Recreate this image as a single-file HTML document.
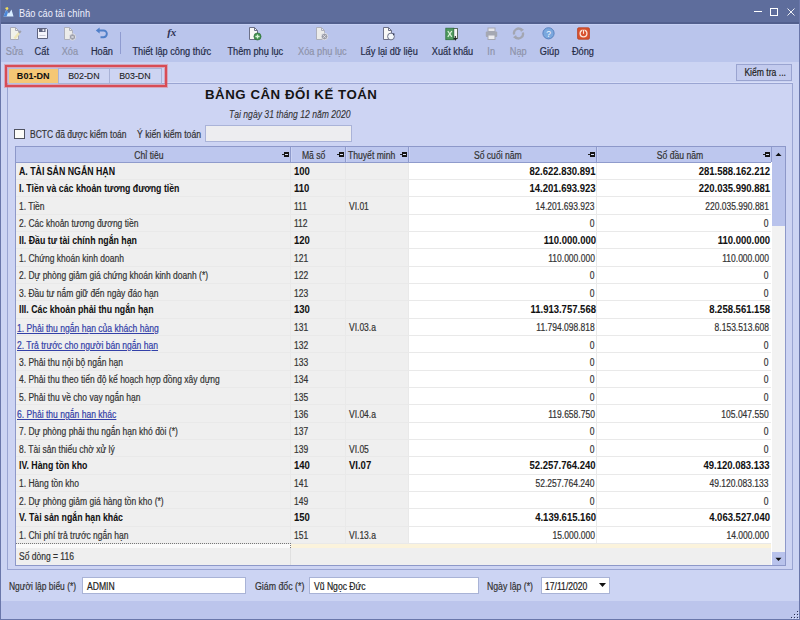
<!DOCTYPE html><html><head><meta charset="utf-8"><style>
*{margin:0;padding:0;box-sizing:border-box}
html,body{width:800px;height:620px;overflow:hidden;background:#ccd4f3;font-family:"Liberation Sans",sans-serif;color:#222}
.a{position:absolute}
.t{position:absolute;white-space:nowrap}
.t>span{display:inline-block}
.sk{-webkit-text-stroke:0.2px currentColor}
</style></head><body>
<div class="a" style="left:0px;top:0px;width:800px;height:24px;background:#5e6d9c;"></div>
<div class="a" style="left:0px;top:22px;width:800px;height:2px;background:#515f8d;"></div>
<div class="t" style="left:18.5px;top:6.5px;font-size:11.5px;line-height:13.225px;color:#eef0ff;font-weight:normal;font-style:normal;"><span style="transform:scaleX(0.8);transform-origin:0 0;">Báo cáo tài chính</span></div>
<svg class="a" style="left:3px;top:7px" width="11" height="10" viewBox="0 0 11 10">
<path d="M0.5 9.5 L3 3 L6 6.5 L8.5 2.5 L10.5 9.5 Z" fill="#d8ecff"/><path d="M0.5 9.5 L3 3 L5 5.5 L3.5 9.5 Z" fill="#4a86d8"/><path d="M2 1 L4 3.5 L5.5 1.5 L4.5 0 Z" fill="#f4e05a"/></svg>
<svg class="a" style="left:750px;top:4px" width="50" height="16" viewBox="0 0 50 16">
<path d="M4 7.5 H12" stroke="#fff" stroke-width="1"/>
<rect x="20.5" y="4.5" width="7" height="7" fill="none" stroke="#fff" stroke-width="1"/>
<path d="M37.5 4.5 L44.5 11.5 M44.5 4.5 L37.5 11.5" stroke="#fff" stroke-width="0.9"/></svg>
<div class="a" style="left:1px;top:24px;width:798px;height:38px;background:#bac5ec;"></div>
<div class="a" style="left:1px;top:24px;width:798px;height:1px;background:#c6d0f3;"></div>
<div class="t" style="left:-185.5px;width:400px;text-align:center;top:45.5px;font-size:10px;line-height:11.5px;color:#8e93aa;font-weight:normal;font-style:normal;-webkit-text-stroke:0.2px #8e93aa;"><span style="transform:scaleX(0.92);transform-origin:50% 0;">Sửa</span></div>
<div class="t" style="left:-158px;width:400px;text-align:center;top:45.5px;font-size:10px;line-height:11.5px;color:#262c48;font-weight:normal;font-style:normal;-webkit-text-stroke:0.2px #262c48;"><span style="transform:scaleX(0.92);transform-origin:50% 0;">Cất</span></div>
<div class="t" style="left:-130.25px;width:400px;text-align:center;top:45.5px;font-size:10px;line-height:11.5px;color:#8e93aa;font-weight:normal;font-style:normal;-webkit-text-stroke:0.2px #8e93aa;"><span style="transform:scaleX(0.92);transform-origin:50% 0;">Xóa</span></div>
<div class="t" style="left:-98.25px;width:400px;text-align:center;top:45.5px;font-size:10px;line-height:11.5px;color:#262c48;font-weight:normal;font-style:normal;-webkit-text-stroke:0.2px #262c48;"><span style="transform:scaleX(0.92);transform-origin:50% 0;">Hoãn</span></div>
<div class="t" style="left:-28.400000000000006px;width:400px;text-align:center;top:45.5px;font-size:10px;line-height:11.5px;color:#262c48;font-weight:normal;font-style:normal;-webkit-text-stroke:0.2px #262c48;"><span style="transform:scaleX(0.92);transform-origin:50% 0;">Thiết lập công thức</span></div>
<div class="t" style="left:55.25px;width:400px;text-align:center;top:45.5px;font-size:10px;line-height:11.5px;color:#262c48;font-weight:normal;font-style:normal;-webkit-text-stroke:0.2px #262c48;"><span style="transform:scaleX(0.92);transform-origin:50% 0;">Thêm phụ lục</span></div>
<div class="t" style="left:122.25px;width:400px;text-align:center;top:45.5px;font-size:10px;line-height:11.5px;color:#8e93aa;font-weight:normal;font-style:normal;-webkit-text-stroke:0.2px #8e93aa;"><span style="transform:scaleX(0.92);transform-origin:50% 0;">Xóa phụ lục</span></div>
<div class="t" style="left:188.89999999999998px;width:400px;text-align:center;top:45.5px;font-size:10px;line-height:11.5px;color:#262c48;font-weight:normal;font-style:normal;-webkit-text-stroke:0.2px #262c48;"><span style="transform:scaleX(0.92);transform-origin:50% 0;">Lấy lại dữ liệu</span></div>
<div class="t" style="left:252.10000000000002px;width:400px;text-align:center;top:45.5px;font-size:10px;line-height:11.5px;color:#262c48;font-weight:normal;font-style:normal;-webkit-text-stroke:0.2px #262c48;"><span style="transform:scaleX(0.92);transform-origin:50% 0;">Xuất khẩu</span></div>
<div class="t" style="left:291.4px;width:400px;text-align:center;top:45.5px;font-size:10px;line-height:11.5px;color:#8e93aa;font-weight:normal;font-style:normal;-webkit-text-stroke:0.2px #8e93aa;"><span style="transform:scaleX(0.92);transform-origin:50% 0;">In</span></div>
<div class="t" style="left:318px;width:400px;text-align:center;top:45.5px;font-size:10px;line-height:11.5px;color:#8e93aa;font-weight:normal;font-style:normal;-webkit-text-stroke:0.2px #8e93aa;"><span style="transform:scaleX(0.92);transform-origin:50% 0;">Nạp</span></div>
<div class="t" style="left:349.20000000000005px;width:400px;text-align:center;top:45.5px;font-size:10px;line-height:11.5px;color:#262c48;font-weight:normal;font-style:normal;-webkit-text-stroke:0.2px #262c48;"><span style="transform:scaleX(0.92);transform-origin:50% 0;">Giúp</span></div>
<div class="t" style="left:383px;width:400px;text-align:center;top:45.5px;font-size:10px;line-height:11.5px;color:#262c48;font-weight:normal;font-style:normal;-webkit-text-stroke:0.2px #262c48;"><span style="transform:scaleX(0.92);transform-origin:50% 0;">Đóng</span></div>
<div class="a" style="left:120px;top:32px;width:1px;height:22px;background:#8f9bd0;"></div>
<svg class="a" style="left:9px;top:27px" width="13" height="13" viewBox="0 0 13 13"><path d="M1.5 0.5 H6.5 L9.5 3.5 V12.5 H1.5 Z" fill="#f1f1ea" stroke="#a9abba"/><path d="M6.5 0.5 V3.5 H9.5" fill="none" stroke="#a9abba"/><path d="M5.5 11.5 L10.5 5.5" stroke="#efe6b8" stroke-width="2.4"/><path d="M10 6 L11.8 3.8" stroke="#9ea0ae" stroke-width="2"/></svg>
<svg class="a" style="left:36px;top:27px" width="13" height="13" viewBox="0 0 13 13"><path d="M1.5 1.5 H10.5 L11.5 2.5 V11.5 H1.5 Z" fill="#f5f5fd" stroke="#5f6480"/><rect x="3" y="1.5" width="6.5" height="3.5" fill="#5f6480"/><rect x="6.5" y="2.2" width="1.8" height="2" fill="#f0f0f8"/><path d="M3.5 8.5 H9.5" stroke="#c9cad8"/></svg>
<svg class="a" style="left:63px;top:27px" width="13" height="14" viewBox="0 0 13 14"><path d="M1.5 0.5 H6.5 L9.5 3.5 V12.5 H1.5 Z" fill="#ececea" stroke="#aeb0bc"/><path d="M6.5 0.5 V3.5 H9.5" fill="none" stroke="#aeb0bc"/><circle cx="9.5" cy="10" r="3.2" fill="#9c9ea9" stroke="#e8e8ee" stroke-width="0.8"/><path d="M8.3 8.8 L10.7 11.2 M10.7 8.8 L8.3 11.2" stroke="#e8e8ee" stroke-width="0.9"/></svg>
<svg class="a" style="left:95px;top:27px" width="14" height="12" viewBox="0 0 14 12"><path d="M4 3.5 H8.5 A3.3 3.3 0 0 1 8.5 10.2 H5.5" fill="none" stroke="#4f7fc8" stroke-width="1.9"/><path d="M0.8 3.5 L4.6 0.4 V6.6 Z" fill="#4f7fc8"/></svg>
<div class="t" style="left:167.2px;top:26.3px;font-size:11px;line-height:12.649999999999999px;color:#2e3354;font-weight:bold;font-style:italic;font-family:'Liberation Serif',serif;"><span style="transform:scaleX(1.0);transform-origin:0 0;">fx</span></div>
<svg class="a" style="left:248px;top:27px" width="14" height="14" viewBox="0 0 14 14"><path d="M1.5 0.5 H6.5 L9.5 3.5 V12.5 H1.5 Z" fill="#f8f8f6" stroke="#6c7088"/><path d="M6.5 0.5 V3.5 H9.5" fill="none" stroke="#6c7088"/><circle cx="9.5" cy="9.5" r="3.6" fill="#3f8f4c" stroke="#2d6b38" stroke-width="0.6"/><path d="M9.5 7.4 V11.6 M7.4 9.5 H11.6" stroke="#d9f5d6" stroke-width="1.3"/></svg>
<svg class="a" style="left:315px;top:27px" width="14" height="14" viewBox="0 0 14 14"><path d="M1.5 0.5 H6.5 L9.5 3.5 V12.5 H1.5 Z" fill="#ececea" stroke="#aeb0bc"/><path d="M6.5 0.5 V3.5 H9.5" fill="none" stroke="#aeb0bc"/><circle cx="9.5" cy="9.5" r="3.3" fill="#9c9ea9" stroke="#e8e8ee" stroke-width="0.8"/><path d="M8.3 8.3 L10.7 10.7 M10.7 8.3 L8.3 10.7" stroke="#e8e8ee" stroke-width="0.9"/></svg>
<svg class="a" style="left:382px;top:27px" width="14" height="14" viewBox="0 0 14 14"><path d="M1.5 0.5 H6.5 L9.5 3.5 V12.5 H1.5 Z" fill="#f8f8f6" stroke="#6c7088"/><path d="M6.5 0.5 V3.5 H9.5" fill="none" stroke="#6c7088"/><circle cx="9" cy="9.5" r="3.4" fill="#f4f8fb" stroke="#6c7088" stroke-width="1"/><path d="M10.5 6.3 L12.8 6.8 L11.6 8.6 Z" fill="#2c3450"/></svg>
<svg class="a" style="left:445px;top:27px" width="14" height="14" viewBox="0 0 14 14"><rect x="8" y="1.5" width="4.5" height="10" fill="#f6f6f6" stroke="#5b6a60"/><rect x="0.8" y="1.2" width="8" height="11.5" fill="#4f9a5e" stroke="#2f6f3e" stroke-width="0.8"/><path d="M2.8 4 L6.8 9.8 M6.8 4 L2.8 9.8" stroke="#dff3dc" stroke-width="1.2"/><path d="M10.3 9 V12.5 M8.8 11 L10.3 12.8 L11.8 11" stroke="#1f2a22" stroke-width="1.1" fill="none"/></svg>
<svg class="a" style="left:485px;top:27px" width="13" height="14" viewBox="0 0 13 14"><rect x="3" y="1" width="7" height="3.5" fill="#e6e6ea" stroke="#a5a8b4"/><rect x="0.8" y="4.5" width="11.4" height="5.5" rx="1" fill="#a5a8b2"/><rect x="3" y="8" width="7" height="4.5" fill="#ededf0" stroke="#a5a8b4"/></svg>
<svg class="a" style="left:512px;top:27px" width="13" height="13" viewBox="0 0 13 13"><path d="M2.2 7.5 A4.5 4.5 0 0 1 9.5 2.8" fill="none" stroke="#a3a6b2" stroke-width="2.3"/><path d="M10.8 5.5 A4.5 4.5 0 0 1 3.5 10.2" fill="none" stroke="#a3a6b2" stroke-width="2.3"/><path d="M8.5 0.5 L12 2.8 L8.8 5 Z" fill="#a3a6b2"/><path d="M4.5 12.5 L1 10.2 L4.2 8 Z" fill="#a3a6b2"/></svg>
<svg class="a" style="left:542px;top:27px" width="13" height="13" viewBox="0 0 13 13"><circle cx="6.5" cy="6.3" r="5.6" fill="#7aa8de" stroke="#5a82bf" stroke-width="1"/><text x="6.5" y="9.6" font-size="8.5" fill="#f4f8ff" text-anchor="middle" font-family="Liberation Sans">?</text></svg>
<svg class="a" style="left:577px;top:27px" width="13" height="13" viewBox="0 0 13 13"><rect x="0.6" y="0.8" width="11.8" height="11.4" rx="1.2" fill="#d9522f" stroke="#b8401f" stroke-width="0.8"/><circle cx="6.5" cy="6.5" r="3.4" fill="none" stroke="#fbe6dc" stroke-width="1.3"/><path d="M6.5 2.5 V7" stroke="#d9522f" stroke-width="2.2"/><path d="M6.5 3 V6.8" stroke="#fbe6dc" stroke-width="1.1"/></svg>
<div class="a" style="left:1px;top:62px;width:798px;height:557px;background:#ccd4f3;"></div>
<div class="a" style="left:8px;top:82px;width:785px;height:1px;background:#d8def8;"></div>
<div class="a" style="left:7px;top:83px;width:786px;height:487px;border:1px solid #9aa5d2;background:#cdd4f3"></div>
<div class="a" style="left:8px;top:68px;width:51px;height:16px;background:#f5c775;border:1px solid #b9c0de;border-right:none"></div>
<div class="a" style="left:58px;top:68px;width:52px;height:16px;background:#cdd4f2;border:1px solid #a9b2d6"></div>
<div class="a" style="left:109px;top:68px;width:53px;height:16px;background:#cdd4f2;border:1px solid #a9b2d6"></div>
<div class="a" style="left:5px;top:65px;width:162px;height:22px;border:2px solid #d84c55;box-shadow:0 0 0 1px rgba(222,110,120,.45),inset 0 0 0 1px rgba(222,110,120,.45)"></div>
<div class="t" style="left:-166.5px;width:400px;text-align:center;top:71px;font-size:9.5px;line-height:10.924999999999999px;color:#111;font-weight:bold;font-style:normal;-webkit-text-stroke:0.05px #111;"><span style="transform:scaleX(0.95);transform-origin:50% 0;">B01-DN</span></div>
<div class="t" style="left:-116px;width:400px;text-align:center;top:71px;font-size:9.5px;line-height:10.924999999999999px;color:#222;font-weight:normal;font-style:normal;-webkit-text-stroke:0.1px #222;"><span style="transform:scaleX(0.93);transform-origin:50% 0;">B02-DN</span></div>
<div class="t" style="left:-65px;width:400px;text-align:center;top:71px;font-size:9.5px;line-height:10.924999999999999px;color:#222;font-weight:normal;font-style:normal;-webkit-text-stroke:0.1px #222;"><span style="transform:scaleX(0.93);transform-origin:50% 0;">B03-DN</span></div>
<div class="a" style="left:736px;top:64px;width:56px;height:17px;background:#c3cbee;border:1px solid #9aa4d0"></div>
<div class="t" style="left:565px;width:400px;text-align:center;top:67px;font-size:10px;line-height:11.5px;color:#222;font-weight:normal;font-style:normal;-webkit-text-stroke:0.2px #222;"><span style="transform:scaleX(0.86);transform-origin:50% 0;">Kiểm tra ...</span></div>
<div class="t" style="left:205px;top:87px;font-size:13.6px;line-height:15.639999999999999px;color:#151515;font-weight:bold;font-style:normal;letter-spacing:0.55px"><span style="transform:scaleX(0.975);transform-origin:0 0;">BẢNG CÂN ĐỐI KẾ TOÁN</span></div>
<div class="t" style="left:229px;top:109px;font-size:10px;line-height:11.5px;color:#333;font-weight:normal;font-style:italic;-webkit-text-stroke:0.1px #333;"><span style="transform:scaleX(0.86);transform-origin:0 0;">Tại ngày 31 tháng 12 năm 2020</span></div>
<div class="a" style="left:14px;top:129px;width:10.5px;height:10px;background:#fcfcf8;border:1px solid #4f5260"></div>
<div class="t" style="left:29.7px;top:129.3px;font-size:10px;line-height:11.5px;color:#333;font-weight:normal;font-style:normal;-webkit-text-stroke:0.2px #333;"><span style="transform:scaleX(0.848);transform-origin:0 0;">BCTC đã được kiểm toán</span></div>
<div class="t" style="left:137px;top:129.3px;font-size:10px;line-height:11.5px;color:#333;font-weight:normal;font-style:normal;-webkit-text-stroke:0.2px #333;"><span style="transform:scaleX(0.866);transform-origin:0 0;">Ý kiến kiểm toán</span></div>
<div class="a" style="left:205px;top:125px;width:147px;height:17px;background:#ededf0;border:1px solid #aab3d8"></div>
<div class="a" style="left:15px;top:146px;width:771px;height:420px;background:#fff;border:1px solid #8d98c9"></div>
<div class="a" style="left:16px;top:163px;width:274px;height:381px;background:#efefef;"></div>
<div class="a" style="left:291px;top:163px;width:117px;height:381px;background:#efefef;"></div>
<div class="a" style="left:16px;top:147px;width:755px;height:15px;background:#bdc7ee;"></div>
<div class="a" style="left:16px;top:162px;width:755px;height:1px;background:#8f9bcc;"></div>
<div class="a" style="left:290px;top:147px;width:1px;height:15px;background:#8f9bcc;"></div>
<div class="a" style="left:291px;top:147px;width:1px;height:15px;background:#cad2f3;"></div>
<div class="a" style="left:345px;top:147px;width:1px;height:15px;background:#8f9bcc;"></div>
<div class="a" style="left:346px;top:147px;width:1px;height:15px;background:#cad2f3;"></div>
<div class="a" style="left:408px;top:147px;width:1px;height:15px;background:#8f9bcc;"></div>
<div class="a" style="left:409px;top:147px;width:1px;height:15px;background:#cad2f3;"></div>
<div class="a" style="left:596px;top:147px;width:1px;height:15px;background:#8f9bcc;"></div>
<div class="a" style="left:597px;top:147px;width:1px;height:15px;background:#cad2f3;"></div>
<div class="a" style="left:771px;top:147px;width:1px;height:15px;background:#8f9bcc;"></div>
<div class="a" style="left:772px;top:147px;width:1px;height:15px;background:#cad2f3;"></div>
<div class="t" style="left:-51.5px;width:400px;text-align:center;top:149.5px;font-size:10px;line-height:11.5px;color:#333;font-weight:normal;font-style:normal;-webkit-text-stroke:0.2px #333;"><span style="transform:scaleX(0.86);transform-origin:50% 0;">Chỉ tiêu</span></div>
<svg class="a" style="left:282px;top:152px" width="7" height="6" viewBox="0 0 7 6"><rect x="0" y="2" width="2" height="1" fill="#222"/><rect x="2" y="0" width="5" height="5" fill="#151515"/><rect x="3" y="2" width="3" height="1" fill="#d8def5"/></svg>
<div class="t" style="left:113.5px;width:400px;text-align:center;top:149.5px;font-size:10px;line-height:11.5px;color:#333;font-weight:normal;font-style:normal;-webkit-text-stroke:0.2px #333;"><span style="transform:scaleX(0.86);transform-origin:50% 0;">Mã số</span></div>
<svg class="a" style="left:337px;top:152px" width="7" height="6" viewBox="0 0 7 6"><rect x="0" y="2" width="2" height="1" fill="#222"/><rect x="2" y="0" width="5" height="5" fill="#151515"/><rect x="3" y="2" width="3" height="1" fill="#d8def5"/></svg>
<div class="t" style="left:348px;top:149.5px;font-size:10px;line-height:11.5px;color:#333;font-weight:normal;font-style:normal;-webkit-text-stroke:0.2px #333;"><span style="transform:scaleX(0.86);transform-origin:0 0;">Thuyết minh</span></div>
<svg class="a" style="left:400px;top:152px" width="7" height="6" viewBox="0 0 7 6"><rect x="0" y="2" width="2" height="1" fill="#222"/><rect x="2" y="0" width="5" height="5" fill="#151515"/><rect x="3" y="2" width="3" height="1" fill="#d8def5"/></svg>
<div class="t" style="left:298.0px;width:400px;text-align:center;top:149.5px;font-size:10px;line-height:11.5px;color:#333;font-weight:normal;font-style:normal;-webkit-text-stroke:0.2px #333;"><span style="transform:scaleX(0.86);transform-origin:50% 0;">Số cuối năm</span></div>
<svg class="a" style="left:588px;top:152px" width="7" height="6" viewBox="0 0 7 6"><rect x="0" y="2" width="2" height="1" fill="#222"/><rect x="2" y="0" width="5" height="5" fill="#151515"/><rect x="3" y="2" width="3" height="1" fill="#d8def5"/></svg>
<div class="t" style="left:479.5px;width:400px;text-align:center;top:149.5px;font-size:10px;line-height:11.5px;color:#333;font-weight:normal;font-style:normal;-webkit-text-stroke:0.2px #333;"><span style="transform:scaleX(0.86);transform-origin:50% 0;">Số đầu năm</span></div>
<svg class="a" style="left:763px;top:152px" width="7" height="6" viewBox="0 0 7 6"><rect x="0" y="2" width="2" height="1" fill="#222"/><rect x="2" y="0" width="5" height="5" fill="#151515"/><rect x="3" y="2" width="3" height="1" fill="#d8def5"/></svg>
<div class="a" style="left:16px;top:179px;width:755px;height:1px;background:#e9e9e9;"></div>
<div class="a" style="left:16px;top:196px;width:755px;height:1px;background:#e9e9e9;"></div>
<div class="a" style="left:16px;top:214px;width:755px;height:1px;background:#e9e9e9;"></div>
<div class="a" style="left:16px;top:231px;width:755px;height:1px;background:#e9e9e9;"></div>
<div class="a" style="left:16px;top:248px;width:755px;height:1px;background:#e9e9e9;"></div>
<div class="a" style="left:16px;top:266px;width:755px;height:1px;background:#e9e9e9;"></div>
<div class="a" style="left:16px;top:283px;width:755px;height:1px;background:#e9e9e9;"></div>
<div class="a" style="left:16px;top:300px;width:755px;height:1px;background:#e9e9e9;"></div>
<div class="a" style="left:16px;top:318px;width:755px;height:1px;background:#e9e9e9;"></div>
<div class="a" style="left:16px;top:335px;width:755px;height:1px;background:#e9e9e9;"></div>
<div class="a" style="left:16px;top:352px;width:755px;height:1px;background:#e9e9e9;"></div>
<div class="a" style="left:16px;top:370px;width:755px;height:1px;background:#e9e9e9;"></div>
<div class="a" style="left:16px;top:387px;width:755px;height:1px;background:#e9e9e9;"></div>
<div class="a" style="left:16px;top:404px;width:755px;height:1px;background:#e9e9e9;"></div>
<div class="a" style="left:16px;top:422px;width:755px;height:1px;background:#e9e9e9;"></div>
<div class="a" style="left:16px;top:439px;width:755px;height:1px;background:#e9e9e9;"></div>
<div class="a" style="left:16px;top:456px;width:755px;height:1px;background:#e9e9e9;"></div>
<div class="a" style="left:16px;top:474px;width:755px;height:1px;background:#e9e9e9;"></div>
<div class="a" style="left:16px;top:491px;width:755px;height:1px;background:#e9e9e9;"></div>
<div class="a" style="left:16px;top:508px;width:755px;height:1px;background:#e9e9e9;"></div>
<div class="a" style="left:16px;top:526px;width:755px;height:1px;background:#e9e9e9;"></div>
<div class="a" style="left:16px;top:543px;width:755px;height:1px;background:#e9e9e9;"></div>
<div class="a" style="left:290px;top:163px;width:1px;height:381px;background:#e9e9e9;"></div>
<div class="a" style="left:345px;top:163px;width:1px;height:381px;background:#e9e9e9;"></div>
<div class="a" style="left:408px;top:163px;width:1px;height:381px;background:#e9e9e9;"></div>
<div class="a" style="left:596px;top:163px;width:1px;height:381px;background:#e9e9e9;"></div>
<div class="t" style="left:19px;top:162.8px;font-size:10px;line-height:17.32px;color:#111;font-weight:bold;font-style:normal;-webkit-text-stroke:0.05px #111;"><span style="transform:scaleX(0.877);transform-origin:0 0;">A. TÀI SẢN NGẮN HẠN</span></div>
<div class="t" style="left:294px;top:162.8px;font-size:10px;line-height:17.32px;color:#111;font-weight:bold;font-style:normal;-webkit-text-stroke:0.05px #111;"><span style="transform:scaleX(0.95);transform-origin:0 0;">100</span></div>
<div class="t" style="left:349px;top:162.8px;font-size:10px;line-height:17.32px;color:#111;font-weight:bold;font-style:normal;-webkit-text-stroke:0.05px #111;"><span style="transform:scaleX(0.95);transform-origin:0 0;"></span></div>
<div class="t" style="left:195.70000000000005px;width:400px;text-align:right;top:162.8px;font-size:10px;line-height:17.32px;color:#111;font-weight:bold;font-style:normal;-webkit-text-stroke:0.05px #111;"><span style="transform:scaleX(0.95);transform-origin:100% 0;">82.622.830.891</span></div>
<div class="t" style="left:369.70000000000005px;width:400px;text-align:right;top:162.8px;font-size:10px;line-height:17.32px;color:#111;font-weight:bold;font-style:normal;-webkit-text-stroke:0.05px #111;"><span style="transform:scaleX(0.95);transform-origin:100% 0;">281.588.162.212</span></div>
<div class="t" style="left:19px;top:180.13333333333335px;font-size:10px;line-height:17.32px;color:#111;font-weight:bold;font-style:normal;-webkit-text-stroke:0.05px #111;"><span style="transform:scaleX(0.877);transform-origin:0 0;">I. Tiền và các khoản tương đương tiền</span></div>
<div class="t" style="left:294px;top:180.13333333333335px;font-size:10px;line-height:17.32px;color:#111;font-weight:bold;font-style:normal;-webkit-text-stroke:0.05px #111;"><span style="transform:scaleX(0.95);transform-origin:0 0;">110</span></div>
<div class="t" style="left:349px;top:180.13333333333335px;font-size:10px;line-height:17.32px;color:#111;font-weight:bold;font-style:normal;-webkit-text-stroke:0.05px #111;"><span style="transform:scaleX(0.95);transform-origin:0 0;"></span></div>
<div class="t" style="left:195.70000000000005px;width:400px;text-align:right;top:180.13333333333335px;font-size:10px;line-height:17.32px;color:#111;font-weight:bold;font-style:normal;-webkit-text-stroke:0.05px #111;"><span style="transform:scaleX(0.95);transform-origin:100% 0;">14.201.693.923</span></div>
<div class="t" style="left:369.70000000000005px;width:400px;text-align:right;top:180.13333333333335px;font-size:10px;line-height:17.32px;color:#111;font-weight:bold;font-style:normal;-webkit-text-stroke:0.05px #111;"><span style="transform:scaleX(0.95);transform-origin:100% 0;">220.035.990.881</span></div>
<div class="t" style="left:19px;top:197.91666666666666px;font-size:10px;line-height:17.32px;color:#333;font-weight:normal;font-style:normal;-webkit-text-stroke:0.2px #333;"><span style="transform:scaleX(0.85);transform-origin:0 0;">1. Tiền</span></div>
<div class="t" style="left:294px;top:197.91666666666666px;font-size:10px;line-height:17.32px;color:#333;font-weight:normal;font-style:normal;-webkit-text-stroke:0.2px #333;"><span style="transform:scaleX(0.85);transform-origin:0 0;">111</span></div>
<div class="t" style="left:349px;top:197.91666666666666px;font-size:10px;line-height:17.32px;color:#333;font-weight:normal;font-style:normal;-webkit-text-stroke:0.2px #333;"><span style="transform:scaleX(0.85);transform-origin:0 0;">VI.01</span></div>
<div class="t" style="left:194.79999999999995px;width:400px;text-align:right;top:197.91666666666666px;font-size:10px;line-height:17.32px;color:#333;font-weight:normal;font-style:normal;-webkit-text-stroke:0.2px #333;"><span style="transform:scaleX(0.85);transform-origin:100% 0;">14.201.693.923</span></div>
<div class="t" style="left:368.79999999999995px;width:400px;text-align:right;top:197.91666666666666px;font-size:10px;line-height:17.32px;color:#333;font-weight:normal;font-style:normal;-webkit-text-stroke:0.2px #333;"><span style="transform:scaleX(0.85);transform-origin:100% 0;">220.035.990.881</span></div>
<div class="t" style="left:19px;top:215.25px;font-size:10px;line-height:17.32px;color:#333;font-weight:normal;font-style:normal;-webkit-text-stroke:0.2px #333;"><span style="transform:scaleX(0.85);transform-origin:0 0;">2. Các khoản tương đương tiền</span></div>
<div class="t" style="left:294px;top:215.25px;font-size:10px;line-height:17.32px;color:#333;font-weight:normal;font-style:normal;-webkit-text-stroke:0.2px #333;"><span style="transform:scaleX(0.85);transform-origin:0 0;">112</span></div>
<div class="t" style="left:349px;top:215.25px;font-size:10px;line-height:17.32px;color:#333;font-weight:normal;font-style:normal;-webkit-text-stroke:0.2px #333;"><span style="transform:scaleX(0.85);transform-origin:0 0;"></span></div>
<div class="t" style="left:194.79999999999995px;width:400px;text-align:right;top:215.25px;font-size:10px;line-height:17.32px;color:#333;font-weight:normal;font-style:normal;-webkit-text-stroke:0.2px #333;"><span style="transform:scaleX(0.85);transform-origin:100% 0;">0</span></div>
<div class="t" style="left:368.79999999999995px;width:400px;text-align:right;top:215.25px;font-size:10px;line-height:17.32px;color:#333;font-weight:normal;font-style:normal;-webkit-text-stroke:0.2px #333;"><span style="transform:scaleX(0.85);transform-origin:100% 0;">0</span></div>
<div class="t" style="left:19px;top:232.13333333333333px;font-size:10px;line-height:17.32px;color:#111;font-weight:bold;font-style:normal;-webkit-text-stroke:0.05px #111;"><span style="transform:scaleX(0.877);transform-origin:0 0;">II. Đầu tư tài chính ngắn hạn</span></div>
<div class="t" style="left:294px;top:232.13333333333333px;font-size:10px;line-height:17.32px;color:#111;font-weight:bold;font-style:normal;-webkit-text-stroke:0.05px #111;"><span style="transform:scaleX(0.95);transform-origin:0 0;">120</span></div>
<div class="t" style="left:349px;top:232.13333333333333px;font-size:10px;line-height:17.32px;color:#111;font-weight:bold;font-style:normal;-webkit-text-stroke:0.05px #111;"><span style="transform:scaleX(0.95);transform-origin:0 0;"></span></div>
<div class="t" style="left:195.70000000000005px;width:400px;text-align:right;top:232.13333333333333px;font-size:10px;line-height:17.32px;color:#111;font-weight:bold;font-style:normal;-webkit-text-stroke:0.05px #111;"><span style="transform:scaleX(0.95);transform-origin:100% 0;">110.000.000</span></div>
<div class="t" style="left:369.70000000000005px;width:400px;text-align:right;top:232.13333333333333px;font-size:10px;line-height:17.32px;color:#111;font-weight:bold;font-style:normal;-webkit-text-stroke:0.05px #111;"><span style="transform:scaleX(0.95);transform-origin:100% 0;">110.000.000</span></div>
<div class="t" style="left:19px;top:249.91666666666669px;font-size:10px;line-height:17.32px;color:#333;font-weight:normal;font-style:normal;-webkit-text-stroke:0.2px #333;"><span style="transform:scaleX(0.85);transform-origin:0 0;">1. Chứng khoán kinh doanh</span></div>
<div class="t" style="left:294px;top:249.91666666666669px;font-size:10px;line-height:17.32px;color:#333;font-weight:normal;font-style:normal;-webkit-text-stroke:0.2px #333;"><span style="transform:scaleX(0.85);transform-origin:0 0;">121</span></div>
<div class="t" style="left:349px;top:249.91666666666669px;font-size:10px;line-height:17.32px;color:#333;font-weight:normal;font-style:normal;-webkit-text-stroke:0.2px #333;"><span style="transform:scaleX(0.85);transform-origin:0 0;"></span></div>
<div class="t" style="left:194.79999999999995px;width:400px;text-align:right;top:249.91666666666669px;font-size:10px;line-height:17.32px;color:#333;font-weight:normal;font-style:normal;-webkit-text-stroke:0.2px #333;"><span style="transform:scaleX(0.85);transform-origin:100% 0;">110.000.000</span></div>
<div class="t" style="left:368.79999999999995px;width:400px;text-align:right;top:249.91666666666669px;font-size:10px;line-height:17.32px;color:#333;font-weight:normal;font-style:normal;-webkit-text-stroke:0.2px #333;"><span style="transform:scaleX(0.85);transform-origin:100% 0;">110.000.000</span></div>
<div class="t" style="left:19px;top:267.25px;font-size:10px;line-height:17.32px;color:#333;font-weight:normal;font-style:normal;-webkit-text-stroke:0.2px #333;"><span style="transform:scaleX(0.85);transform-origin:0 0;">2. Dự phòng giảm giá chứng khoán kinh doanh (*)</span></div>
<div class="t" style="left:294px;top:267.25px;font-size:10px;line-height:17.32px;color:#333;font-weight:normal;font-style:normal;-webkit-text-stroke:0.2px #333;"><span style="transform:scaleX(0.85);transform-origin:0 0;">122</span></div>
<div class="t" style="left:349px;top:267.25px;font-size:10px;line-height:17.32px;color:#333;font-weight:normal;font-style:normal;-webkit-text-stroke:0.2px #333;"><span style="transform:scaleX(0.85);transform-origin:0 0;"></span></div>
<div class="t" style="left:194.79999999999995px;width:400px;text-align:right;top:267.25px;font-size:10px;line-height:17.32px;color:#333;font-weight:normal;font-style:normal;-webkit-text-stroke:0.2px #333;"><span style="transform:scaleX(0.85);transform-origin:100% 0;">0</span></div>
<div class="t" style="left:368.79999999999995px;width:400px;text-align:right;top:267.25px;font-size:10px;line-height:17.32px;color:#333;font-weight:normal;font-style:normal;-webkit-text-stroke:0.2px #333;"><span style="transform:scaleX(0.85);transform-origin:100% 0;">0</span></div>
<div class="t" style="left:19px;top:284.5833333333333px;font-size:10px;line-height:17.32px;color:#333;font-weight:normal;font-style:normal;-webkit-text-stroke:0.2px #333;"><span style="transform:scaleX(0.85);transform-origin:0 0;">3. Đầu tư nắm giữ đến ngày đáo hạn</span></div>
<div class="t" style="left:294px;top:284.5833333333333px;font-size:10px;line-height:17.32px;color:#333;font-weight:normal;font-style:normal;-webkit-text-stroke:0.2px #333;"><span style="transform:scaleX(0.85);transform-origin:0 0;">123</span></div>
<div class="t" style="left:349px;top:284.5833333333333px;font-size:10px;line-height:17.32px;color:#333;font-weight:normal;font-style:normal;-webkit-text-stroke:0.2px #333;"><span style="transform:scaleX(0.85);transform-origin:0 0;"></span></div>
<div class="t" style="left:194.79999999999995px;width:400px;text-align:right;top:284.5833333333333px;font-size:10px;line-height:17.32px;color:#333;font-weight:normal;font-style:normal;-webkit-text-stroke:0.2px #333;"><span style="transform:scaleX(0.85);transform-origin:100% 0;">0</span></div>
<div class="t" style="left:368.79999999999995px;width:400px;text-align:right;top:284.5833333333333px;font-size:10px;line-height:17.32px;color:#333;font-weight:normal;font-style:normal;-webkit-text-stroke:0.2px #333;"><span style="transform:scaleX(0.85);transform-origin:100% 0;">0</span></div>
<div class="t" style="left:19px;top:301.46666666666664px;font-size:10px;line-height:17.32px;color:#111;font-weight:bold;font-style:normal;-webkit-text-stroke:0.05px #111;"><span style="transform:scaleX(0.877);transform-origin:0 0;">III. Các khoản phải thu ngắn hạn</span></div>
<div class="t" style="left:294px;top:301.46666666666664px;font-size:10px;line-height:17.32px;color:#111;font-weight:bold;font-style:normal;-webkit-text-stroke:0.05px #111;"><span style="transform:scaleX(0.95);transform-origin:0 0;">130</span></div>
<div class="t" style="left:349px;top:301.46666666666664px;font-size:10px;line-height:17.32px;color:#111;font-weight:bold;font-style:normal;-webkit-text-stroke:0.05px #111;"><span style="transform:scaleX(0.95);transform-origin:0 0;"></span></div>
<div class="t" style="left:195.70000000000005px;width:400px;text-align:right;top:301.46666666666664px;font-size:10px;line-height:17.32px;color:#111;font-weight:bold;font-style:normal;-webkit-text-stroke:0.05px #111;"><span style="transform:scaleX(0.95);transform-origin:100% 0;">11.913.757.568</span></div>
<div class="t" style="left:369.70000000000005px;width:400px;text-align:right;top:301.46666666666664px;font-size:10px;line-height:17.32px;color:#111;font-weight:bold;font-style:normal;-webkit-text-stroke:0.05px #111;"><span style="transform:scaleX(0.95);transform-origin:100% 0;">8.258.561.158</span></div>
<div class="t" style="left:17.3px;top:319.55px;font-size:10px;line-height:17.32px;color:#3340a8;font-weight:normal;font-style:normal;-webkit-text-stroke:0.2px #3340a8;"><span style="transform:scaleX(0.855);transform-origin:0 0;text-decoration:underline">1. Phải thu ngắn hạn của khách hàng</span></div>
<div class="t" style="left:294px;top:319.25px;font-size:10px;line-height:17.32px;color:#333;font-weight:normal;font-style:normal;-webkit-text-stroke:0.2px #333;"><span style="transform:scaleX(0.85);transform-origin:0 0;">131</span></div>
<div class="t" style="left:349px;top:319.25px;font-size:10px;line-height:17.32px;color:#333;font-weight:normal;font-style:normal;-webkit-text-stroke:0.2px #333;"><span style="transform:scaleX(0.85);transform-origin:0 0;">VI.03.a</span></div>
<div class="t" style="left:194.79999999999995px;width:400px;text-align:right;top:319.25px;font-size:10px;line-height:17.32px;color:#333;font-weight:normal;font-style:normal;-webkit-text-stroke:0.2px #333;"><span style="transform:scaleX(0.85);transform-origin:100% 0;">11.794.098.818</span></div>
<div class="t" style="left:368.79999999999995px;width:400px;text-align:right;top:319.25px;font-size:10px;line-height:17.32px;color:#333;font-weight:normal;font-style:normal;-webkit-text-stroke:0.2px #333;"><span style="transform:scaleX(0.85);transform-origin:100% 0;">8.153.513.608</span></div>
<div class="t" style="left:17.3px;top:336.8833333333334px;font-size:10px;line-height:17.32px;color:#3340a8;font-weight:normal;font-style:normal;-webkit-text-stroke:0.2px #3340a8;"><span style="transform:scaleX(0.855);transform-origin:0 0;text-decoration:underline">2. Trả trước cho người bán ngắn hạn</span></div>
<div class="t" style="left:294px;top:336.58333333333337px;font-size:10px;line-height:17.32px;color:#333;font-weight:normal;font-style:normal;-webkit-text-stroke:0.2px #333;"><span style="transform:scaleX(0.85);transform-origin:0 0;">132</span></div>
<div class="t" style="left:349px;top:336.58333333333337px;font-size:10px;line-height:17.32px;color:#333;font-weight:normal;font-style:normal;-webkit-text-stroke:0.2px #333;"><span style="transform:scaleX(0.85);transform-origin:0 0;"></span></div>
<div class="t" style="left:194.79999999999995px;width:400px;text-align:right;top:336.58333333333337px;font-size:10px;line-height:17.32px;color:#333;font-weight:normal;font-style:normal;-webkit-text-stroke:0.2px #333;"><span style="transform:scaleX(0.85);transform-origin:100% 0;">0</span></div>
<div class="t" style="left:368.79999999999995px;width:400px;text-align:right;top:336.58333333333337px;font-size:10px;line-height:17.32px;color:#333;font-weight:normal;font-style:normal;-webkit-text-stroke:0.2px #333;"><span style="transform:scaleX(0.85);transform-origin:100% 0;">0</span></div>
<div class="t" style="left:19px;top:353.91666666666663px;font-size:10px;line-height:17.32px;color:#333;font-weight:normal;font-style:normal;-webkit-text-stroke:0.2px #333;"><span style="transform:scaleX(0.85);transform-origin:0 0;">3. Phải thu nội bộ ngắn hạn</span></div>
<div class="t" style="left:294px;top:353.91666666666663px;font-size:10px;line-height:17.32px;color:#333;font-weight:normal;font-style:normal;-webkit-text-stroke:0.2px #333;"><span style="transform:scaleX(0.85);transform-origin:0 0;">133</span></div>
<div class="t" style="left:349px;top:353.91666666666663px;font-size:10px;line-height:17.32px;color:#333;font-weight:normal;font-style:normal;-webkit-text-stroke:0.2px #333;"><span style="transform:scaleX(0.85);transform-origin:0 0;"></span></div>
<div class="t" style="left:194.79999999999995px;width:400px;text-align:right;top:353.91666666666663px;font-size:10px;line-height:17.32px;color:#333;font-weight:normal;font-style:normal;-webkit-text-stroke:0.2px #333;"><span style="transform:scaleX(0.85);transform-origin:100% 0;">0</span></div>
<div class="t" style="left:368.79999999999995px;width:400px;text-align:right;top:353.91666666666663px;font-size:10px;line-height:17.32px;color:#333;font-weight:normal;font-style:normal;-webkit-text-stroke:0.2px #333;"><span style="transform:scaleX(0.85);transform-origin:100% 0;">0</span></div>
<div class="t" style="left:19px;top:371.25px;font-size:10px;line-height:17.32px;color:#333;font-weight:normal;font-style:normal;-webkit-text-stroke:0.2px #333;"><span style="transform:scaleX(0.85);transform-origin:0 0;">4. Phải thu theo tiến độ kế hoạch hợp đồng xây dựng</span></div>
<div class="t" style="left:294px;top:371.25px;font-size:10px;line-height:17.32px;color:#333;font-weight:normal;font-style:normal;-webkit-text-stroke:0.2px #333;"><span style="transform:scaleX(0.85);transform-origin:0 0;">134</span></div>
<div class="t" style="left:349px;top:371.25px;font-size:10px;line-height:17.32px;color:#333;font-weight:normal;font-style:normal;-webkit-text-stroke:0.2px #333;"><span style="transform:scaleX(0.85);transform-origin:0 0;"></span></div>
<div class="t" style="left:194.79999999999995px;width:400px;text-align:right;top:371.25px;font-size:10px;line-height:17.32px;color:#333;font-weight:normal;font-style:normal;-webkit-text-stroke:0.2px #333;"><span style="transform:scaleX(0.85);transform-origin:100% 0;">0</span></div>
<div class="t" style="left:368.79999999999995px;width:400px;text-align:right;top:371.25px;font-size:10px;line-height:17.32px;color:#333;font-weight:normal;font-style:normal;-webkit-text-stroke:0.2px #333;"><span style="transform:scaleX(0.85);transform-origin:100% 0;">0</span></div>
<div class="t" style="left:19px;top:388.58333333333337px;font-size:10px;line-height:17.32px;color:#333;font-weight:normal;font-style:normal;-webkit-text-stroke:0.2px #333;"><span style="transform:scaleX(0.85);transform-origin:0 0;">5. Phải thu về cho vay ngắn hạn</span></div>
<div class="t" style="left:294px;top:388.58333333333337px;font-size:10px;line-height:17.32px;color:#333;font-weight:normal;font-style:normal;-webkit-text-stroke:0.2px #333;"><span style="transform:scaleX(0.85);transform-origin:0 0;">135</span></div>
<div class="t" style="left:349px;top:388.58333333333337px;font-size:10px;line-height:17.32px;color:#333;font-weight:normal;font-style:normal;-webkit-text-stroke:0.2px #333;"><span style="transform:scaleX(0.85);transform-origin:0 0;"></span></div>
<div class="t" style="left:194.79999999999995px;width:400px;text-align:right;top:388.58333333333337px;font-size:10px;line-height:17.32px;color:#333;font-weight:normal;font-style:normal;-webkit-text-stroke:0.2px #333;"><span style="transform:scaleX(0.85);transform-origin:100% 0;">0</span></div>
<div class="t" style="left:368.79999999999995px;width:400px;text-align:right;top:388.58333333333337px;font-size:10px;line-height:17.32px;color:#333;font-weight:normal;font-style:normal;-webkit-text-stroke:0.2px #333;"><span style="transform:scaleX(0.85);transform-origin:100% 0;">0</span></div>
<div class="t" style="left:17.3px;top:406.21666666666664px;font-size:10px;line-height:17.32px;color:#3340a8;font-weight:normal;font-style:normal;-webkit-text-stroke:0.2px #3340a8;"><span style="transform:scaleX(0.855);transform-origin:0 0;text-decoration:underline">6. Phải thu ngắn hạn khác</span></div>
<div class="t" style="left:294px;top:405.91666666666663px;font-size:10px;line-height:17.32px;color:#333;font-weight:normal;font-style:normal;-webkit-text-stroke:0.2px #333;"><span style="transform:scaleX(0.85);transform-origin:0 0;">136</span></div>
<div class="t" style="left:349px;top:405.91666666666663px;font-size:10px;line-height:17.32px;color:#333;font-weight:normal;font-style:normal;-webkit-text-stroke:0.2px #333;"><span style="transform:scaleX(0.85);transform-origin:0 0;">VI.04.a</span></div>
<div class="t" style="left:194.79999999999995px;width:400px;text-align:right;top:405.91666666666663px;font-size:10px;line-height:17.32px;color:#333;font-weight:normal;font-style:normal;-webkit-text-stroke:0.2px #333;"><span style="transform:scaleX(0.85);transform-origin:100% 0;">119.658.750</span></div>
<div class="t" style="left:368.79999999999995px;width:400px;text-align:right;top:405.91666666666663px;font-size:10px;line-height:17.32px;color:#333;font-weight:normal;font-style:normal;-webkit-text-stroke:0.2px #333;"><span style="transform:scaleX(0.85);transform-origin:100% 0;">105.047.550</span></div>
<div class="t" style="left:19px;top:423.25px;font-size:10px;line-height:17.32px;color:#333;font-weight:normal;font-style:normal;-webkit-text-stroke:0.2px #333;"><span style="transform:scaleX(0.85);transform-origin:0 0;">7. Dự phòng phải thu ngắn hạn khó đòi (*)</span></div>
<div class="t" style="left:294px;top:423.25px;font-size:10px;line-height:17.32px;color:#333;font-weight:normal;font-style:normal;-webkit-text-stroke:0.2px #333;"><span style="transform:scaleX(0.85);transform-origin:0 0;">137</span></div>
<div class="t" style="left:349px;top:423.25px;font-size:10px;line-height:17.32px;color:#333;font-weight:normal;font-style:normal;-webkit-text-stroke:0.2px #333;"><span style="transform:scaleX(0.85);transform-origin:0 0;"></span></div>
<div class="t" style="left:194.79999999999995px;width:400px;text-align:right;top:423.25px;font-size:10px;line-height:17.32px;color:#333;font-weight:normal;font-style:normal;-webkit-text-stroke:0.2px #333;"><span style="transform:scaleX(0.85);transform-origin:100% 0;">0</span></div>
<div class="t" style="left:368.79999999999995px;width:400px;text-align:right;top:423.25px;font-size:10px;line-height:17.32px;color:#333;font-weight:normal;font-style:normal;-webkit-text-stroke:0.2px #333;"><span style="transform:scaleX(0.85);transform-origin:100% 0;">0</span></div>
<div class="t" style="left:19px;top:440.5833333333333px;font-size:10px;line-height:17.32px;color:#333;font-weight:normal;font-style:normal;-webkit-text-stroke:0.2px #333;"><span style="transform:scaleX(0.85);transform-origin:0 0;">8. Tài sản thiếu chờ xử lý</span></div>
<div class="t" style="left:294px;top:440.5833333333333px;font-size:10px;line-height:17.32px;color:#333;font-weight:normal;font-style:normal;-webkit-text-stroke:0.2px #333;"><span style="transform:scaleX(0.85);transform-origin:0 0;">139</span></div>
<div class="t" style="left:349px;top:440.5833333333333px;font-size:10px;line-height:17.32px;color:#333;font-weight:normal;font-style:normal;-webkit-text-stroke:0.2px #333;"><span style="transform:scaleX(0.85);transform-origin:0 0;">VI.05</span></div>
<div class="t" style="left:194.79999999999995px;width:400px;text-align:right;top:440.5833333333333px;font-size:10px;line-height:17.32px;color:#333;font-weight:normal;font-style:normal;-webkit-text-stroke:0.2px #333;"><span style="transform:scaleX(0.85);transform-origin:100% 0;">0</span></div>
<div class="t" style="left:368.79999999999995px;width:400px;text-align:right;top:440.5833333333333px;font-size:10px;line-height:17.32px;color:#333;font-weight:normal;font-style:normal;-webkit-text-stroke:0.2px #333;"><span style="transform:scaleX(0.85);transform-origin:100% 0;">0</span></div>
<div class="t" style="left:19px;top:457.4666666666667px;font-size:10px;line-height:17.32px;color:#111;font-weight:bold;font-style:normal;-webkit-text-stroke:0.05px #111;"><span style="transform:scaleX(0.877);transform-origin:0 0;">IV. Hàng tồn kho</span></div>
<div class="t" style="left:294px;top:457.4666666666667px;font-size:10px;line-height:17.32px;color:#111;font-weight:bold;font-style:normal;-webkit-text-stroke:0.05px #111;"><span style="transform:scaleX(0.95);transform-origin:0 0;">140</span></div>
<div class="t" style="left:349px;top:457.4666666666667px;font-size:10px;line-height:17.32px;color:#111;font-weight:bold;font-style:normal;-webkit-text-stroke:0.05px #111;"><span style="transform:scaleX(0.95);transform-origin:0 0;">VI.07</span></div>
<div class="t" style="left:195.70000000000005px;width:400px;text-align:right;top:457.4666666666667px;font-size:10px;line-height:17.32px;color:#111;font-weight:bold;font-style:normal;-webkit-text-stroke:0.05px #111;"><span style="transform:scaleX(0.95);transform-origin:100% 0;">52.257.764.240</span></div>
<div class="t" style="left:369.70000000000005px;width:400px;text-align:right;top:457.4666666666667px;font-size:10px;line-height:17.32px;color:#111;font-weight:bold;font-style:normal;-webkit-text-stroke:0.05px #111;"><span style="transform:scaleX(0.95);transform-origin:100% 0;">49.120.083.133</span></div>
<div class="t" style="left:19px;top:475.25px;font-size:10px;line-height:17.32px;color:#333;font-weight:normal;font-style:normal;-webkit-text-stroke:0.2px #333;"><span style="transform:scaleX(0.85);transform-origin:0 0;">1. Hàng tồn kho</span></div>
<div class="t" style="left:294px;top:475.25px;font-size:10px;line-height:17.32px;color:#333;font-weight:normal;font-style:normal;-webkit-text-stroke:0.2px #333;"><span style="transform:scaleX(0.85);transform-origin:0 0;">141</span></div>
<div class="t" style="left:349px;top:475.25px;font-size:10px;line-height:17.32px;color:#333;font-weight:normal;font-style:normal;-webkit-text-stroke:0.2px #333;"><span style="transform:scaleX(0.85);transform-origin:0 0;"></span></div>
<div class="t" style="left:194.79999999999995px;width:400px;text-align:right;top:475.25px;font-size:10px;line-height:17.32px;color:#333;font-weight:normal;font-style:normal;-webkit-text-stroke:0.2px #333;"><span style="transform:scaleX(0.85);transform-origin:100% 0;">52.257.764.240</span></div>
<div class="t" style="left:368.79999999999995px;width:400px;text-align:right;top:475.25px;font-size:10px;line-height:17.32px;color:#333;font-weight:normal;font-style:normal;-webkit-text-stroke:0.2px #333;"><span style="transform:scaleX(0.85);transform-origin:100% 0;">49.120.083.133</span></div>
<div class="t" style="left:19px;top:492.5833333333333px;font-size:10px;line-height:17.32px;color:#333;font-weight:normal;font-style:normal;-webkit-text-stroke:0.2px #333;"><span style="transform:scaleX(0.85);transform-origin:0 0;">2. Dự phòng giảm giá hàng tồn kho (*)</span></div>
<div class="t" style="left:294px;top:492.5833333333333px;font-size:10px;line-height:17.32px;color:#333;font-weight:normal;font-style:normal;-webkit-text-stroke:0.2px #333;"><span style="transform:scaleX(0.85);transform-origin:0 0;">149</span></div>
<div class="t" style="left:349px;top:492.5833333333333px;font-size:10px;line-height:17.32px;color:#333;font-weight:normal;font-style:normal;-webkit-text-stroke:0.2px #333;"><span style="transform:scaleX(0.85);transform-origin:0 0;"></span></div>
<div class="t" style="left:194.79999999999995px;width:400px;text-align:right;top:492.5833333333333px;font-size:10px;line-height:17.32px;color:#333;font-weight:normal;font-style:normal;-webkit-text-stroke:0.2px #333;"><span style="transform:scaleX(0.85);transform-origin:100% 0;">0</span></div>
<div class="t" style="left:368.79999999999995px;width:400px;text-align:right;top:492.5833333333333px;font-size:10px;line-height:17.32px;color:#333;font-weight:normal;font-style:normal;-webkit-text-stroke:0.2px #333;"><span style="transform:scaleX(0.85);transform-origin:100% 0;">0</span></div>
<div class="t" style="left:19px;top:509.4666666666667px;font-size:10px;line-height:17.32px;color:#111;font-weight:bold;font-style:normal;-webkit-text-stroke:0.05px #111;"><span style="transform:scaleX(0.877);transform-origin:0 0;">V. Tài sản ngắn hạn khác</span></div>
<div class="t" style="left:294px;top:509.4666666666667px;font-size:10px;line-height:17.32px;color:#111;font-weight:bold;font-style:normal;-webkit-text-stroke:0.05px #111;"><span style="transform:scaleX(0.95);transform-origin:0 0;">150</span></div>
<div class="t" style="left:349px;top:509.4666666666667px;font-size:10px;line-height:17.32px;color:#111;font-weight:bold;font-style:normal;-webkit-text-stroke:0.05px #111;"><span style="transform:scaleX(0.95);transform-origin:0 0;"></span></div>
<div class="t" style="left:195.70000000000005px;width:400px;text-align:right;top:509.4666666666667px;font-size:10px;line-height:17.32px;color:#111;font-weight:bold;font-style:normal;-webkit-text-stroke:0.05px #111;"><span style="transform:scaleX(0.95);transform-origin:100% 0;">4.139.615.160</span></div>
<div class="t" style="left:369.70000000000005px;width:400px;text-align:right;top:509.4666666666667px;font-size:10px;line-height:17.32px;color:#111;font-weight:bold;font-style:normal;-webkit-text-stroke:0.05px #111;"><span style="transform:scaleX(0.95);transform-origin:100% 0;">4.063.527.040</span></div>
<div class="t" style="left:19px;top:527.25px;font-size:10px;line-height:17.32px;color:#333;font-weight:normal;font-style:normal;-webkit-text-stroke:0.2px #333;"><span style="transform:scaleX(0.85);transform-origin:0 0;">1. Chi phí trả trước ngắn hạn</span></div>
<div class="t" style="left:294px;top:527.25px;font-size:10px;line-height:17.32px;color:#333;font-weight:normal;font-style:normal;-webkit-text-stroke:0.2px #333;"><span style="transform:scaleX(0.85);transform-origin:0 0;">151</span></div>
<div class="t" style="left:349px;top:527.25px;font-size:10px;line-height:17.32px;color:#333;font-weight:normal;font-style:normal;-webkit-text-stroke:0.2px #333;"><span style="transform:scaleX(0.85);transform-origin:0 0;">VI.13.a</span></div>
<div class="t" style="left:194.79999999999995px;width:400px;text-align:right;top:527.25px;font-size:10px;line-height:17.32px;color:#333;font-weight:normal;font-style:normal;-webkit-text-stroke:0.2px #333;"><span style="transform:scaleX(0.85);transform-origin:100% 0;">15.000.000</span></div>
<div class="t" style="left:368.79999999999995px;width:400px;text-align:right;top:527.25px;font-size:10px;line-height:17.32px;color:#333;font-weight:normal;font-style:normal;-webkit-text-stroke:0.2px #333;"><span style="transform:scaleX(0.85);transform-origin:100% 0;">14.000.000</span></div>
<div class="a" style="left:16px;top:544px;width:274px;height:4px;background:#fafafa;"></div>
<div class="a" style="left:291px;top:544px;width:480px;height:4px;background:#fbf3dc;"></div>
<div class="a" style="left:16px;top:548px;width:755px;height:17px;background:#efefef;"></div>
<div class="a" style="left:16px;top:543px;width:275px;height:5px;border-top:1px dotted #777;border-right:1px dotted #777"></div>
<div class="a" style="left:290px;top:548px;width:1px;height:17px;background:#e0e0e0;"></div>
<div class="t" style="left:19px;top:547.5px;font-size:10px;line-height:17px;color:#333;font-weight:normal;font-style:normal;-webkit-text-stroke:0.2px #333;"><span style="transform:scaleX(0.85);transform-origin:0 0;">Số dòng = 116</span></div>
<div class="a" style="left:772px;top:147px;width:13px;height:418px;background:#f2f2f2;"></div>
<div class="a" style="left:772px;top:147px;width:13px;height:79px;background:#b9c3ec;"></div>
<div class="a" style="left:772px;top:552px;width:13px;height:13px;background:#b9c3ec;"></div>
<svg class="a" style="left:775px;top:152px" width="7" height="5"><path d="M0.5 4 L3.5 0.8 L6.5 4 Z" fill="#111"/></svg>
<svg class="a" style="left:775px;top:557px" width="7" height="5"><path d="M0.5 0.8 L3.5 4 L6.5 0.8 Z" fill="#111"/></svg>
<div class="t" style="left:9px;top:581px;font-size:10px;line-height:11.5px;color:#333;font-weight:normal;font-style:normal;-webkit-text-stroke:0.2px #333;"><span style="transform:scaleX(0.845);transform-origin:0 0;">Người lập biểu (*)</span></div>
<div class="a" style="left:82px;top:577px;width:164px;height:17px;background:#fff;border:1px solid #a9b3d6"></div>
<div class="t" style="left:87px;top:581px;font-size:10px;line-height:11.5px;color:#222;font-weight:normal;font-style:normal;-webkit-text-stroke:0.2px #222;"><span style="transform:scaleX(0.86);transform-origin:0 0;">ADMIN</span></div>
<div class="t" style="left:254.5px;top:581px;font-size:10px;line-height:11.5px;color:#333;font-weight:normal;font-style:normal;-webkit-text-stroke:0.2px #333;"><span style="transform:scaleX(0.88);transform-origin:0 0;">Giám đốc (*)</span></div>
<div class="a" style="left:309px;top:577px;width:170px;height:17px;background:#fff;border:1px solid #a9b3d6"></div>
<div class="t" style="left:314px;top:581px;font-size:10px;line-height:11.5px;color:#222;font-weight:normal;font-style:normal;-webkit-text-stroke:0.2px #222;"><span style="transform:scaleX(0.86);transform-origin:0 0;">Vũ Ngọc Đức</span></div>
<div class="t" style="left:487px;top:581px;font-size:10px;line-height:11.5px;color:#333;font-weight:normal;font-style:normal;-webkit-text-stroke:0.2px #333;"><span style="transform:scaleX(0.87);transform-origin:0 0;">Ngày lập (*)</span></div>
<div class="a" style="left:541px;top:577px;width:69px;height:17px;background:#fff;border:1px solid #a9b3d6"></div>
<div class="t" style="left:545px;top:581px;font-size:10px;line-height:11.5px;color:#222;font-weight:normal;font-style:normal;-webkit-text-stroke:0.2px #222;"><span style="transform:scaleX(0.86);transform-origin:0 0;">17/11/2020</span></div>
<svg class="a" style="left:599px;top:583px" width="8" height="5"><path d="M0 0 L7 0 L3.5 4 Z" fill="#111"/></svg>
<div class="a" style="left:1px;top:601px;width:798px;height:18px;background:#bcc5ec;"></div>
<div class="a" style="left:0px;top:0px;width:1px;height:620px;background:#6a77aa;"></div>
<div class="a" style="left:799px;top:0px;width:1px;height:620px;background:#6a77aa;"></div>
<div class="a" style="left:0px;top:619px;width:800px;height:1px;background:#6a77aa;"></div>
<div class="a" style="left:798px;top:612px;width:1px;height:1px;background:#dfe5fb;"></div>
<div class="a" style="left:797px;top:611px;width:1px;height:1px;background:#2a3050;"></div>
<div class="a" style="left:795px;top:615px;width:1px;height:1px;background:#dfe5fb;"></div>
<div class="a" style="left:794px;top:614px;width:1px;height:1px;background:#2a3050;"></div>
<div class="a" style="left:798px;top:615px;width:1px;height:1px;background:#dfe5fb;"></div>
<div class="a" style="left:797px;top:614px;width:1px;height:1px;background:#2a3050;"></div>
<div class="a" style="left:792px;top:618px;width:1px;height:1px;background:#dfe5fb;"></div>
<div class="a" style="left:791px;top:617px;width:1px;height:1px;background:#2a3050;"></div>
<div class="a" style="left:795px;top:618px;width:1px;height:1px;background:#dfe5fb;"></div>
<div class="a" style="left:794px;top:617px;width:1px;height:1px;background:#2a3050;"></div>
<div class="a" style="left:798px;top:618px;width:1px;height:1px;background:#dfe5fb;"></div>
<div class="a" style="left:797px;top:617px;width:1px;height:1px;background:#2a3050;"></div>
</body></html>
